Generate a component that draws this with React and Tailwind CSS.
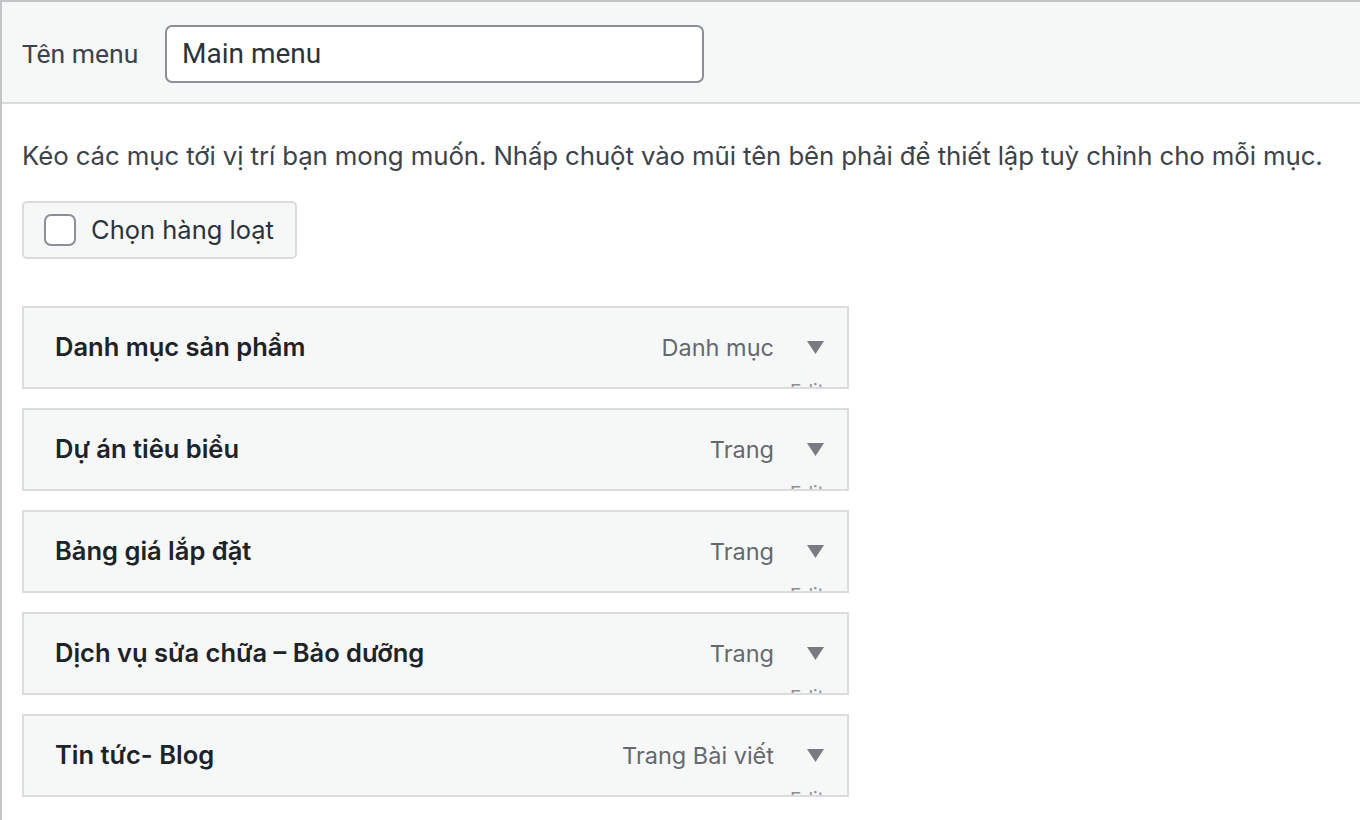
const ITEMS = [
  { title: "Danh mục sản phẩm", type: "Danh mục" },
  { title: "Dự án tiêu biểu", type: "Trang" },
  { title: "Bảng giá lắp đặt", type: "Trang" },
  { title: "Dịch vụ sửa chữa – Bảo dưỡng", type: "Trang" },
  { title: "Tin tức- Blog", type: "Trang Bài viết" },
];

function MenuItem({ title, type }) {
  return (
    <div className="relative w-[827px] h-[83px] bg-[#f6f7f7] border-2 border-[#dcdcde] overflow-hidden flex items-center">
      <span className="pl-[31px] text-[25.5px] font-semibold text-[#1d2327]">{title}</span>
      <span className="ml-auto text-[23.5px] text-[#646970]">{type}</span>
      <span className="w-[73px] flex justify-center pl-[10px]">
        <svg width="17" height="13" viewBox="0 0 17 13">
          <polygon points="0,0 17,0 8.5,13" fill="#787c82" />
        </svg>
      </span>
      {/* "Edit" link peeks out under the row, mostly clipped */}
      <span className="absolute left-[766px] top-[74px] text-[19px] leading-none text-[#8c8f94]">Edit</span>
    </div>
  );
}

export default function App() {
  return (
    <div
      className="w-[1360px] h-[820px] bg-white border-l-2 border-t-2 border-[#c3c4c7] overflow-hidden"
      style={{ fontFamily: "Inter, 'Noto Sans', sans-serif" }}
    >
      {/* Header */}
      <div className="h-[102px] bg-[#f6f7f7] border-b-2 border-[#dcdcde] flex items-center pl-[20px] pt-[4px]">
        <span className="text-[26.5px] text-[#3c434a] w-[143px]" style={{ fontFamily: "Roboto, sans-serif" }}>
          Tên menu
        </span>
        <div className="w-[539px] h-[58px] bg-white border-2 border-[#8c8f94] rounded-[7px] flex items-center px-[15px] text-[28px] text-[#2c3338]" style={{ fontFamily: "Roboto, sans-serif" }}>
          Main menu
        </div>
      </div>

      <div className="pl-[20px]">
        <p className="mt-[36px] text-[25.8px] text-[#3c434a] leading-[32px] tracking-[-0.1px] whitespace-nowrap">
          Kéo các mục tới vị trí bạn mong muốn. Nhấp chuột vào mũi tên bên phải để thiết lập tuỳ chỉnh cho mỗi mục.
        </p>

        <div className="mt-[29px] w-[275px] h-[58px] bg-[#f6f7f7] border-2 border-[#dcdcde] rounded-[5px] flex items-center pl-[20px] gap-[15px]">
          <span className="w-[32px] h-[32px] bg-white border-2 border-[#8c8f94] rounded-[7px] shrink-0" />
          <span className="text-[25.5px] text-[#2c3338]">Chọn hàng loạt</span>
        </div>

        <div className="mt-[47px] flex flex-col gap-[19px]">
          {ITEMS.map((it) => (
            <MenuItem key={it.title} {...it} />
          ))}
        </div>
      </div>
    </div>
  );
}
